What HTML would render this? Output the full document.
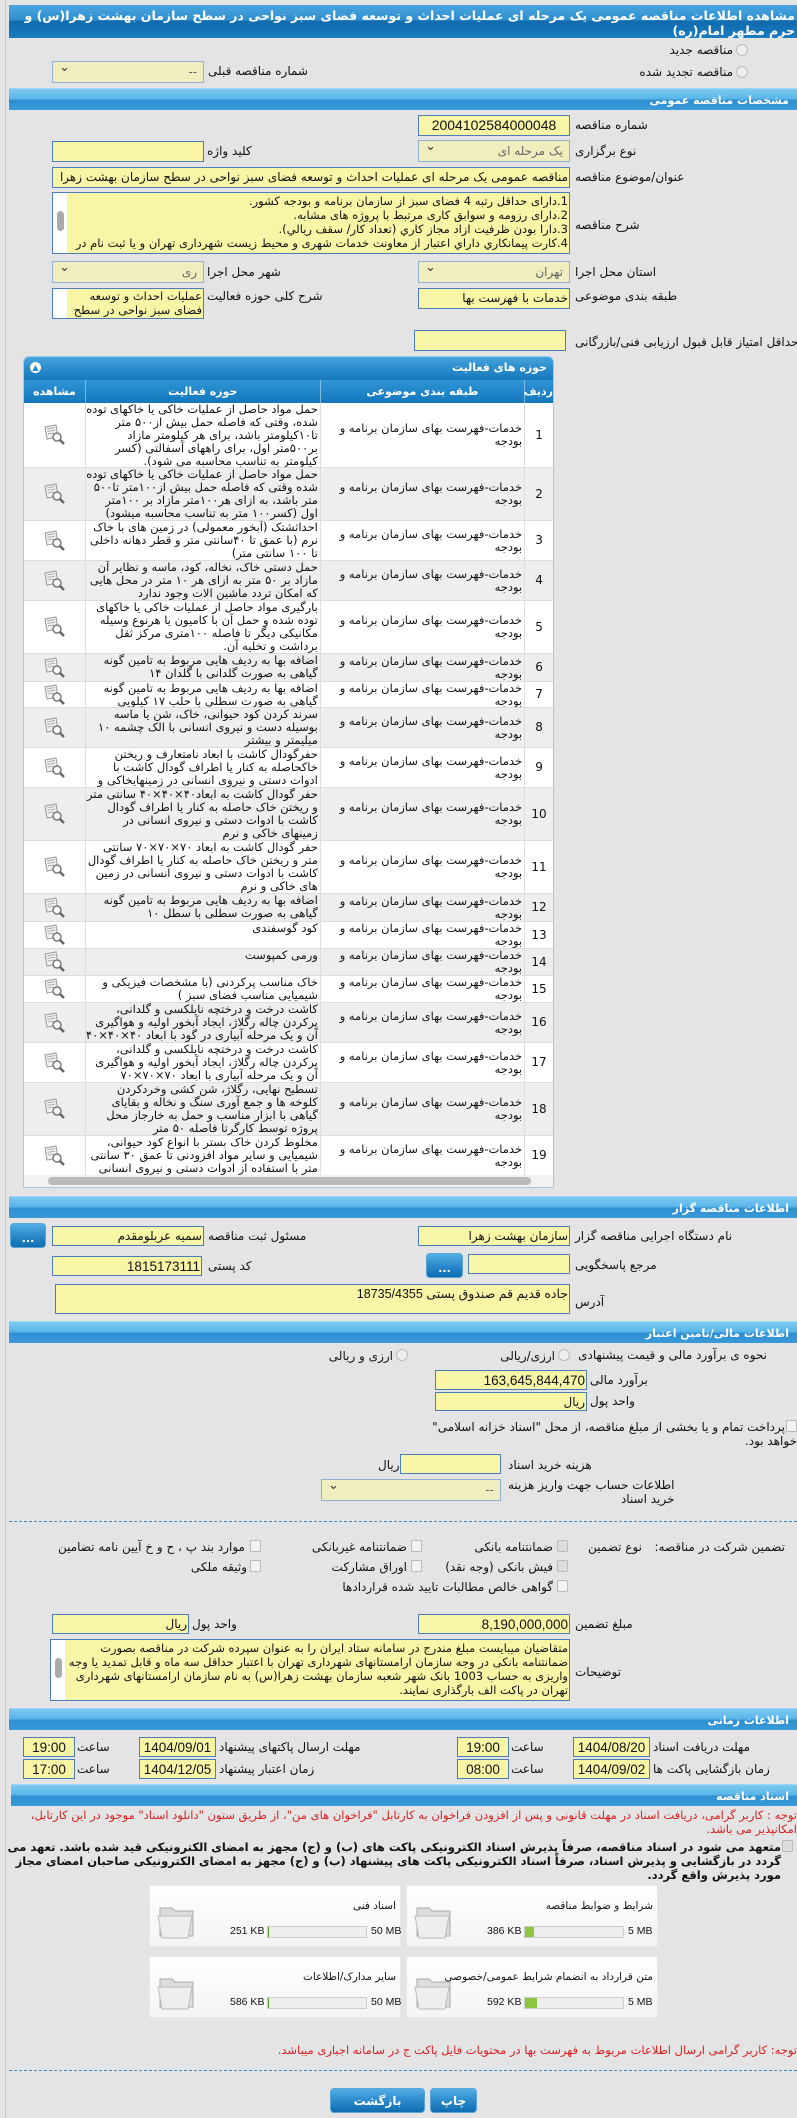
<!DOCTYPE html>
<html><head><meta charset="utf-8"><style>
*{box-sizing:border-box;margin:0;padding:0}
body{width:797px;height:2118px;background:#e4e4e4;font-family:"DejaVu Sans","Liberation Sans",sans-serif;font-size:11px;color:#111;position:relative;overflow:hidden}
.a{position:absolute}
.vl{position:absolute;left:5px;top:0;width:1px;height:2118px;background:#c4c4c4}
.tb{position:absolute;left:9px;right:0;top:5px;height:33px;background:linear-gradient(#4aa6e0,#2f8ecf 45%,#0f6aae 50%,#1c7cc0);color:#fff;font-weight:bold;font-size:12.5px;direction:rtl;text-align:right;padding:3px 2px 0 0;line-height:15px}
.sb{position:absolute;left:9px;right:0;height:22px;background:linear-gradient(#7ccaf0,#5bb6ea 45%,#2c8ed2 55%,#3c9ad8);border-top:1px solid #9dd6f4;color:#fff;font-weight:bold;font-size:11px;direction:rtl;text-align:right;padding:5px 8px 0 0}
.in{position:absolute;background:#f8f5a6;border:1px solid #4b7db9;direction:rtl;text-align:right;white-space:nowrap;overflow:hidden;font-size:12px;padding:2px 1px;line-height:15px}
.sel{position:absolute;background:#f0eebf;border:1px solid #8fb0d3;direction:rtl;text-align:right;white-space:nowrap;overflow:hidden;font-size:12px;padding:2px 6px;color:#666;line-height:16px}
.sel:after{content:"⌄";position:absolute;left:6px;top:-2px;color:#333;font-size:13px}
.lb{position:absolute;direction:rtl;text-align:right;white-space:nowrap;font-size:12px}
.ta{position:absolute;background:#f8f5a6;border:1px solid #4b7db9;direction:rtl;text-align:right;font-size:11.5px;line-height:21px;overflow:hidden;padding:0 1px 0 16px}
.ta .sc{position:absolute;left:0;top:0;bottom:0;width:14px;background:#fff}
.ta .sc i{position:absolute;left:4px;top:18px;width:7px;height:20px;border-radius:4px;background:#aaa}
.btn{position:absolute;background:linear-gradient(#53aee6,#2b8bcc 50%,#106cb0);border:1px solid #5aa4d6;border-radius:4px;color:#fff;font-size:11px;text-align:center;font-weight:bold}
.rad{position:absolute;width:12px;height:12px;border-radius:50%;border:1px solid #bbb;background:#eee}
.cb{position:absolute;width:11px;height:12px;border:1px solid #bbb;background:#f3f3f3;border-radius:2px}
.tbl{position:absolute;left:23px;top:356px;width:531px;height:832px;background:#fff;border:1px solid #9ccbe6;border-radius:6px 6px 0 0;overflow:hidden}
.th1{height:23px;background:linear-gradient(#47a4dc,#2a8ccc 50%,#1878bc);color:#fff;font-weight:bold;direction:rtl;font-size:11px;padding:4px 6px 0 0;position:relative}
.th2{display:flex;direction:rtl;height:23px;background:linear-gradient(#2f95d5,#1477bd);color:#fff;font-weight:bold;font-size:11px}
.th2 div{border-left:1px solid #7dbbe3;text-align:center;padding-top:5px}
.r{display:flex;direction:rtl;border-bottom:1px solid #ddd;font-size:11.5px;line-height:13px;overflow:hidden}
.r div{border-left:1px solid #ddd;overflow:hidden}
.r .c1{width:29px;display:flex;align-items:center;justify-content:center;font-size:12px}
.r .c2{width:205px;display:flex;align-items:center;padding-right:2px}
.r .c3{width:236px;padding-right:2px;text-align:right}
.r .c4{width:61px;border:none;display:flex;align-items:center;justify-content:center}
.g{background:#eee}
.fb{position:absolute;width:252px;height:62px;background:linear-gradient(#fff,#f4f4f4);border:1px solid #e8e8e8}
.fb .t{position:absolute;right:4px;top:14px;direction:rtl;font-size:10.5px;white-space:nowrap}
.fb .bar{position:absolute;left:117px;top:40px;width:100px;height:12px;background:#eee;border:1px solid #ccc}
.fb .bar i{position:absolute;left:0;top:0;bottom:0;background:#8ec63f}
.fb .s1{position:absolute;left:80px;top:39px;font-size:10.5px;white-space:nowrap;font-family:"Liberation Sans"}
.fb .s2{position:absolute;left:221px;top:39px;font-size:10.5px;white-space:nowrap;font-family:"Liberation Sans"}
.fb .fo{position:absolute;left:6px;top:14px}
.red{color:#d92020}
</style></head><body>
<div class="vl"></div>
<div class="tb">مشاهده اطلاعات مناقصه عمومی یک مرحله ای عملیات احداث و توسعه فضای سبز نواحی در سطح سازمان بهشت زهرا(س) و حرم مطهر امام(ره)</div>

<div class="rad" style="left:736px;top:44px"></div><div class="lb" style="right:64px;top:43px">مناقصه جدید</div>
<div class="rad" style="left:736px;top:66px"></div><div class="lb" style="right:64px;top:65px">مناقصه تجدید شده</div>
<div class="sel" style="left:52px;top:61px;width:152px;height:22px">--</div>
<div class="lb" style="left:208px;top:64px">شماره مناقصه قبلی</div>

<div class="sb" style="top:88px">مشخصات مناقصه عمومی</div>
<div class="in" style="left:418px;top:115px;width:152px;height:21px;text-align:center;font-family:'Liberation Sans';font-size:14px">2004102584000048</div>
<div class="lb" style="left:575px;top:118px">شماره مناقصه</div>
<div class="sel" style="left:418px;top:140px;width:152px;height:22px">یک مرحله ای</div>
<div class="lb" style="left:575px;top:144px">نوع برگزاری</div>
<div class="in" style="left:52px;top:141px;width:152px;height:21px"></div>
<div class="lb" style="left:207px;top:144px">کلید واژه</div>
<div class="in" style="left:52px;top:167px;width:518px;height:21px;direction:rtl">مناقصه عمومی یک مرحله ای عملیات احداث و توسعه فضای سبز نواحی در سطح سازمان بهشت زهرا</div>
<div class="lb" style="left:575px;top:170px">عنوان/موضوع مناقصه</div>
<div class="ta" style="left:52px;top:192px;width:518px;height:62px;line-height:14px;padding-top:1px"><div class="sc"><i></i></div>1.دارای حداقل رتبه 4 فضای سبز از سازمان برنامه و بودجه کشور.<br>2.دارای رزومه و سوابق کاری مرتبط با پروژه های مشابه.<br>3.دارا بودن ظرفيت ازاد مجاز كاري (تعداد كار/ سقف ريالي).<br>4.کارت پیمانکاري داراي اعتبار از معاونت خدمات شهری و محیط زیست شهرداری تهران و یا ثبت نام در</div>
<div class="lb" style="left:575px;top:218px">شرح مناقصه</div>
<div class="sel" style="left:418px;top:261px;width:152px;height:22px">تهران</div>
<div class="lb" style="left:575px;top:265px">استان محل اجرا</div>
<div class="sel" style="left:52px;top:261px;width:152px;height:22px">ری</div>
<div class="lb" style="left:207px;top:265px">شهر محل اجرا</div>
<div class="in" style="left:418px;top:288px;width:152px;height:21px">خدمات با فهرست بها</div>
<div class="lb" style="left:575px;top:289px">طبقه بندی موضوعی</div>
<div class="ta" style="left:52px;top:288px;width:152px;height:31px;line-height:14px"><div class="sc" style="background:#fff"></div>عملیات احداث و توسعه فضای سبز نواحی در سطح</div>
<div class="lb" style="left:207px;top:289px">شرح کلی حوزه فعالیت</div>
<div class="in" style="left:414px;top:330px;width:152px;height:21px"></div>
<div class="lb" style="left:575px;top:335px">حداقل امتیاز قابل قبول ارزیابی فنی/بازرگانی</div>

<div class="tbl">
<div class="th1">حوزه های فعالیت<span style="position:absolute;left:6px;top:5px;width:11px;height:11px;border-radius:50%;background:#fff;color:#2a8ccc;font-size:8px;line-height:11px;text-align:center">▲</span></div>
<div class="th2"><div style="width:29px">ردیف</div><div style="width:205px">طبقه بندی موضوعی</div><div style="width:236px">حوزه فعالیت</div><div style="width:61px;border:none">مشاهده</div></div>
<div id="rows"></div>
<div style="position:absolute;left:0;right:0;bottom:0;height:12px;background:#f2f2f2"><div style="position:absolute;left:24px;right:22px;top:2px;height:8px;border-radius:4px;background:#bbb"></div></div>
</div>

<div class="sb" style="top:1196px">اطلاعات مناقصه گزار</div>
<div class="in" style="left:418px;top:1226px;width:152px;height:20px">سازمان بهشت زهرا</div>
<div class="lb" style="left:575px;top:1229px">نام دستگاه اجرایی مناقصه گزار</div>
<div class="in" style="left:52px;top:1226px;width:152px;height:20px">سمیه عربلومقدم</div>
<div class="lb" style="left:208px;top:1229px">مسئول ثبت مناقصه</div>
<div class="btn" style="left:10px;top:1223px;width:36px;height:25px;padding-top:8px">...</div>
<div class="in" style="left:468px;top:1254px;width:102px;height:20px"></div>
<div class="lb" style="left:575px;top:1258px">مرجع پاسخگویی</div>
<div class="btn" style="left:426px;top:1253px;width:37px;height:25px;padding-top:8px">...</div>
<div class="in" style="left:52px;top:1256px;width:150px;height:20px;font-family:'Liberation Sans';font-size:13.5px">1815173111</div>
<div class="lb" style="left:208px;top:1259px">کد پستی</div>
<div class="in" style="left:55px;top:1284px;width:515px;height:30px;font-family:'Liberation Sans','DejaVu Sans';font-size:12.5px">جاده قدیم قم صندوق پستی 18735/4355</div>
<div class="lb" style="left:575px;top:1295px">آدرس</div>

<div class="sb" style="top:1321px">اطلاعات مالی/تامین اعتبار</div>
<div class="lb" style="right:30px;top:1348px">نحوه ی برآورد مالی و قیمت پیشنهادی</div>
<div class="rad" style="left:558px;top:1349px"></div><div class="lb" style="right:242px;top:1349px">ارزی/ریالی</div>
<div class="rad" style="left:396px;top:1349px"></div><div class="lb" style="right:404px;top:1349px">ارزی و ریالی</div>
<div class="in" style="left:435px;top:1370px;width:152px;height:20px;font-family:'Liberation Sans';font-size:13.5px">163,645,844,470</div>
<div class="lb" style="left:590px;top:1373px">برآورد مالی</div>
<div class="in" style="left:435px;top:1392px;width:152px;height:19px">ریال</div>
<div class="lb" style="left:590px;top:1394px">واحد پول</div>
<div class="cb" style="left:786px;top:1420px"></div>
<div class="lb" style="right:12px;top:1420px;width:370px">پرداخت تمام و یا بخشی از مبلغ مناقصه، از محل "اسناد خزانه اسلامی"</div>
<div class="lb" style="right:0;top:1434px">خواهد بود.</div>
<div class="in" style="left:400px;top:1454px;width:101px;height:20px"></div>
<div class="lb" style="left:508px;top:1458px">هزینه خرید اسناد</div>
<div class="lb" style="left:378px;top:1458px">ریال</div>
<div class="sel" style="left:321px;top:1479px;width:180px;height:22px">--</div>
<div class="lb" style="left:508px;top:1478px;line-height:14px">اطلاعات حساب جهت واریز هزینه<br>خرید اسناد</div>
<div class="a" style="left:9px;right:0;top:1521px;border-top:1px dashed #3d8fcf"></div>

<div class="lb" style="right:12px;top:1540px">تضمین شرکت در مناقصه:</div>
<div class="lb" style="right:155px;top:1540px">نوع تضمین</div>
<div class="cb" style="left:557px;top:1540px;background:#ddd"></div><div class="lb" style="right:244px;top:1540px">ضمانتنامه بانکی</div>
<div class="cb" style="left:411px;top:1540px"></div><div class="lb" style="right:390px;top:1540px">ضمانتنامه غیربانکی</div>
<div class="cb" style="left:250px;top:1540px"></div><div class="lb" style="right:552px;top:1540px">موارد بند پ ، ح و خ آیین نامه تضامین</div>
<div class="cb" style="left:557px;top:1560px;background:#ddd"></div><div class="lb" style="right:244px;top:1560px">فیش بانکی (وجه نقد)</div>
<div class="cb" style="left:411px;top:1560px"></div><div class="lb" style="right:390px;top:1560px">اوراق مشارکت</div>
<div class="cb" style="left:250px;top:1560px"></div><div class="lb" style="right:550px;top:1560px">وثیقه ملکی</div>
<div class="cb" style="left:557px;top:1580px"></div><div class="lb" style="right:244px;top:1580px">گواهی خالص مطالبات تایید شده قراردادها</div>

<div class="in" style="left:418px;top:1614px;width:152px;height:20px;font-family:'Liberation Sans';font-size:13.5px">8,190,000,000</div>
<div class="lb" style="left:575px;top:1617px">مبلغ تضمین</div>
<div class="in" style="left:52px;top:1614px;width:137px;height:20px">ریال</div>
<div class="lb" style="left:192px;top:1617px">واحد پول</div>
<div class="ta" style="left:50px;top:1639px;width:520px;height:62px;line-height:14px;padding-top:1px"><div class="sc"><i></i></div>متقاضیان میبایست مبلغ مندرج در سامانه ستاد ایران را به عنوان سپرده شرکت در مناقصه بصورت ضمانتنامه بانکی در وجه سازمان ارامستانهای شهرداری تهران با اعتبار حداقل سه ماه و قابل تمدید یا وجه واریزی به حساب 1003 بانک شهر شعبه سازمان بهشت زهرا(س) به نام سازمان ارامستانهای شهرداری تهران در پاکت الف بارگذاری نمایند.</div>
<div class="lb" style="left:575px;top:1665px">توضیحات</div>

<div class="sb" style="top:1708px">اطلاعات زمانی</div>
<div class="in" style="left:573px;top:1737px;width:77px;height:20px;font-family:'Liberation Sans';font-size:13.5px;text-align:center">1404/08/20</div>
<div class="lb" style="left:653px;top:1740px">مهلت دریافت اسناد</div>
<div class="in" style="left:457px;top:1737px;width:52px;height:20px;font-family:'Liberation Sans';font-size:13.5px;text-align:center">19:00</div>
<div class="lb" style="left:511px;top:1740px">ساعت</div>
<div class="in" style="left:139px;top:1737px;width:77px;height:20px;font-family:'Liberation Sans';font-size:13.5px;text-align:center">1404/09/01</div>
<div class="lb" style="left:219px;top:1740px">مهلت ارسال پاکتهای پیشنهاد</div>
<div class="in" style="left:23px;top:1737px;width:52px;height:20px;font-family:'Liberation Sans';font-size:13.5px;text-align:center">19:00</div>
<div class="lb" style="left:77px;top:1740px">ساعت</div>
<div class="in" style="left:573px;top:1759px;width:77px;height:20px;font-family:'Liberation Sans';font-size:13.5px;text-align:center">1404/09/02</div>
<div class="lb" style="left:653px;top:1762px">زمان بازگشایی پاکت ها</div>
<div class="in" style="left:457px;top:1759px;width:52px;height:20px;font-family:'Liberation Sans';font-size:13.5px;text-align:center">08:00</div>
<div class="lb" style="left:511px;top:1762px">ساعت</div>
<div class="in" style="left:139px;top:1759px;width:77px;height:20px;font-family:'Liberation Sans';font-size:13.5px;text-align:center">1404/12/05</div>
<div class="lb" style="left:219px;top:1762px">زمان اعتبار پیشنهاد</div>
<div class="in" style="left:23px;top:1759px;width:52px;height:20px;font-family:'Liberation Sans';font-size:13.5px;text-align:center">17:00</div>
<div class="lb" style="left:77px;top:1762px">ساعت</div>

<div class="sb" style="top:1784px;left:11px">اسناد مناقصه</div>
<div class="lb red" style="right:0;top:1808px;width:770px;white-space:normal;font-size:11.5px;line-height:14px">توجه : کاربر گرامی، دریافت اسناد در مهلت قانونی و پس از افزودن فراخوان به کارتابل "فراخوان های من"، از طریق ستون "دانلود اسناد" موجود در این کارتابل، امکانپذیر می باشد.</div>
<div class="cb" style="left:782px;top:1840px;background:#ddd"></div>
<div class="lb" style="right:0;top:1840px;width:790px;white-space:normal;font-weight:bold;font-size:11.5px;line-height:14px;padding-right:16px">متعهد می شود در اسناد مناقصه، صرفاً پذیرش اسناد الکترونیکی پاکت های (ب) و (ج) مجهز به امضای الکترونیکی قید شده باشد. تعهد می گردد در بازگشایی و پذیرش اسناد، صرفاً اسناد الکترونیکی پاکت های پیشنهاد (ب) و (ج) مجهز به امضای الکترونیکی صاحبان امضای مجاز مورد پذیرش واقع گردد.</div>

<div id="files"></div>

<div class="lb red" style="right:0;top:2043px;font-size:11.5px">توجه: کاربر گرامی ارسال اطلاعات مربوط به فهرست بها در محتویات فایل پاکت ج در سامانه اجباری میباشد.</div>
<div class="a" style="left:9px;right:0;top:2070px;border-top:1px dashed #3d8fcf"></div>
<div class="btn" style="left:330px;top:2088px;width:95px;height:25px;padding-top:5px;font-size:12px">بازگشت</div>
<div class="btn" style="left:430px;top:2088px;width:47px;height:25px;padding-top:5px;font-size:12px">چاپ</div>

<script>
var cat="خدمات-فهرست بهای سازمان برنامه و بودجه";
var R=[
[65,"حمل مواد حاصل از عملیات خاکی یا خاکهای توده شده، وقتی که فاصله حمل بیش از۵۰۰ متر تا۱۰کیلومتر باشد، برای هر کیلومتر مازاد بر۵۰۰متر اول، برای راههای آسفالتی (کسر کیلومتر به تناسب محاسبه می شود)."],
[53,"حمل مواد حاصل از عملیات خاکی یا خاکهای توده شده وقتی که فاصله حمل بیش از۱۰۰متر تا۵۰۰ متر باشد، به ازای هر۱۰۰متر مازاد بر ۱۰۰متر اول (کسر۱۰۰ متر به تناسب محاسبه میشود)"],
[40,"احداثشتک (آبخور معمولی) در زمین های با خاک نرم (با عمق تا ۴۰سانتی متر و قطر دهانه داخلی تا ۱۰۰ سانتی متر)"],
[40,"حمل دستی خاک، نخاله، کود، ماسه و نظایر آن مازاد بر ۵۰ متر به ازای هر ۱۰ متر در محل هایی که امکان تردد ماشین الات وجود ندارد"],
[53,"بارگیری مواد حاصل از عملیات خاکی یا خاکهای توده شده و حمل آن با کامیون یا هرنوع وسیله مکانیکی دیگر تا فاصله ۱۰۰متری مرکز ثقل برداشت و تخلیه آن."],
[28,"اضافه بها به ردیف هایی مربوط به تامین گونه گیاهی به صورت گلدانی با گلدان ۱۴"],
[26,"اضافه بها به ردیف هایی مربوط به تامین گونه گیاهی به صورت سطلی با حلب ۱۷ کیلویی"],
[40,"سرند کردن کود حیوانی، خاک، شن یا ماسه بوسیله دست و نیروی انسانی با الک چشمه ۱۰ میلیمتر و بیشتر"],
[40,"حفرگودال کاشت با ابعاد نامتعارف و ریختن خاکحاصله به کنار یا اطراف گودال کاشت با ادوات دستی و نیروی انسانی در زمینهایخاکی و نرم"],
[53,"حفر گودال کاشت به ابعاد۴۰×۴۰×۴۰ سانتی متر و ریختن خاک حاصله به کنار یا اطراف گودال کاشت با ادوات دستی و نیروی انسانی در زمینهای خاکی و نرم"],
[53,"حفر گودال کاشت به ابعاد ۷۰×۷۰×۷۰ سانتی متر و ریختن خاک حاصله به کنار یا اطراف گودال کاشت با ادوات دستی و نیروی انسانی در زمین های خاکی و نرم"],
[28,"اضافه بها به ردیف هایی مربوط به تامین گونه گیاهی به صورت سطلی با سطل ۱۰"],
[27,"کود گوسفندی"],[27,"ورمی کمپوست"],
[27,"خاک مناسب پرکردنی (با مشخصات فیزیکی و شیمیایی مناسب فضای سبز )"],
[40,"کاشت درخت و درختچه نایلکسی و گلدانی، پرکردن چاله رگلاژ، ایجاد آبخور اولیه و هواگیری آن و یک مرحله آبیاری در گود با ابعاد ۴۰×۴۰×۴۰"],
[40,"کاشت درخت و درختچه نایلکسی و گلدانی، پرکردن چاله رگلاژ، ایجاد آبخور اولیه و هواگیری آن و یک مرحله آبیاری با ابعاد ۷۰×۷۰×۷۰"],
[53,"تسطیح نهایی، رگلاژ، شن کشی وخردکردن کلوخه ها و جمع آوری سنگ و نخاله و بقایای گیاهی با ابزار مناسب و حمل به خارجاز محل پروژه توسط کارگرتا فاصله ۵۰ متر"],
[40,"مخلوط کردن خاک بستر با انواع کود حیوانی، شیمیایی و سایر مواد افزودنی تا عمق ۳۰ سانتی متر با استفاده از ادوات دستی و نیروی انسانی"]];
var ic='<svg width="24" height="22" viewBox="0 0 24 22"><path d="M3 3l11-2 2 12-11 2z" fill="#f4f4f4" stroke="#999"/><path d="M5 5l8-1.5M5.4 7.5l8-1.5M5.8 10l6-1" stroke="#aaa"/><circle cx="15" cy="13" r="4" fill="#fff" stroke="#777" stroke-width="1.5"/><path d="M18 16l4 4" stroke="#666" stroke-width="2.5"/></svg>';
var h="";R.forEach(function(r,i){h+='<div class="r'+(i%2?' g':'')+'" style="height:'+r[0]+'px"><div class="c1">'+(i+1)+'</div><div class="c2">'+cat+'</div><div class="c3">'+r[1]+'</div><div class="c4">'+ic+'</div></div>';});
document.getElementById("rows").innerHTML=h;
var fo='<svg class="fo" width="42" height="40" viewBox="0 0 42 40"><path d="M4 8h12l3 3h18v25H4z" fill="#ddd" stroke="#aaa"/><path d="M2 16h34l-4 22H6z" fill="#eee" stroke="#bbb"/></svg>';
var F=[[406,1885,"شرایط و ضوابط مناقصه","386 KB",9,"5 MB"],[149,1885,"اسناد فنی","251 KB",1,"50 MB"],[406,1956,"متن قرارداد به انضمام شرایط عمومی/خصوصی","592 KB",12,"5 MB"],[149,1956,"سایر مدارک/اطلاعات","586 KB",1,"50 MB"]];
var f="";F.forEach(function(x){f+='<div class="fb" style="left:'+x[0]+'px;top:'+x[1]+'px">'+fo+'<div class="t">'+x[2]+'</div><div class="s1">'+x[3]+'</div><div class="bar"><i style="width:'+x[4]+'px'+(x[4]<2?';background:#5a9a2a':'')+'"></i></div><div class="s2">'+x[5]+'</div></div>';});
document.getElementById("files").innerHTML=f;
</script>
</body></html>
